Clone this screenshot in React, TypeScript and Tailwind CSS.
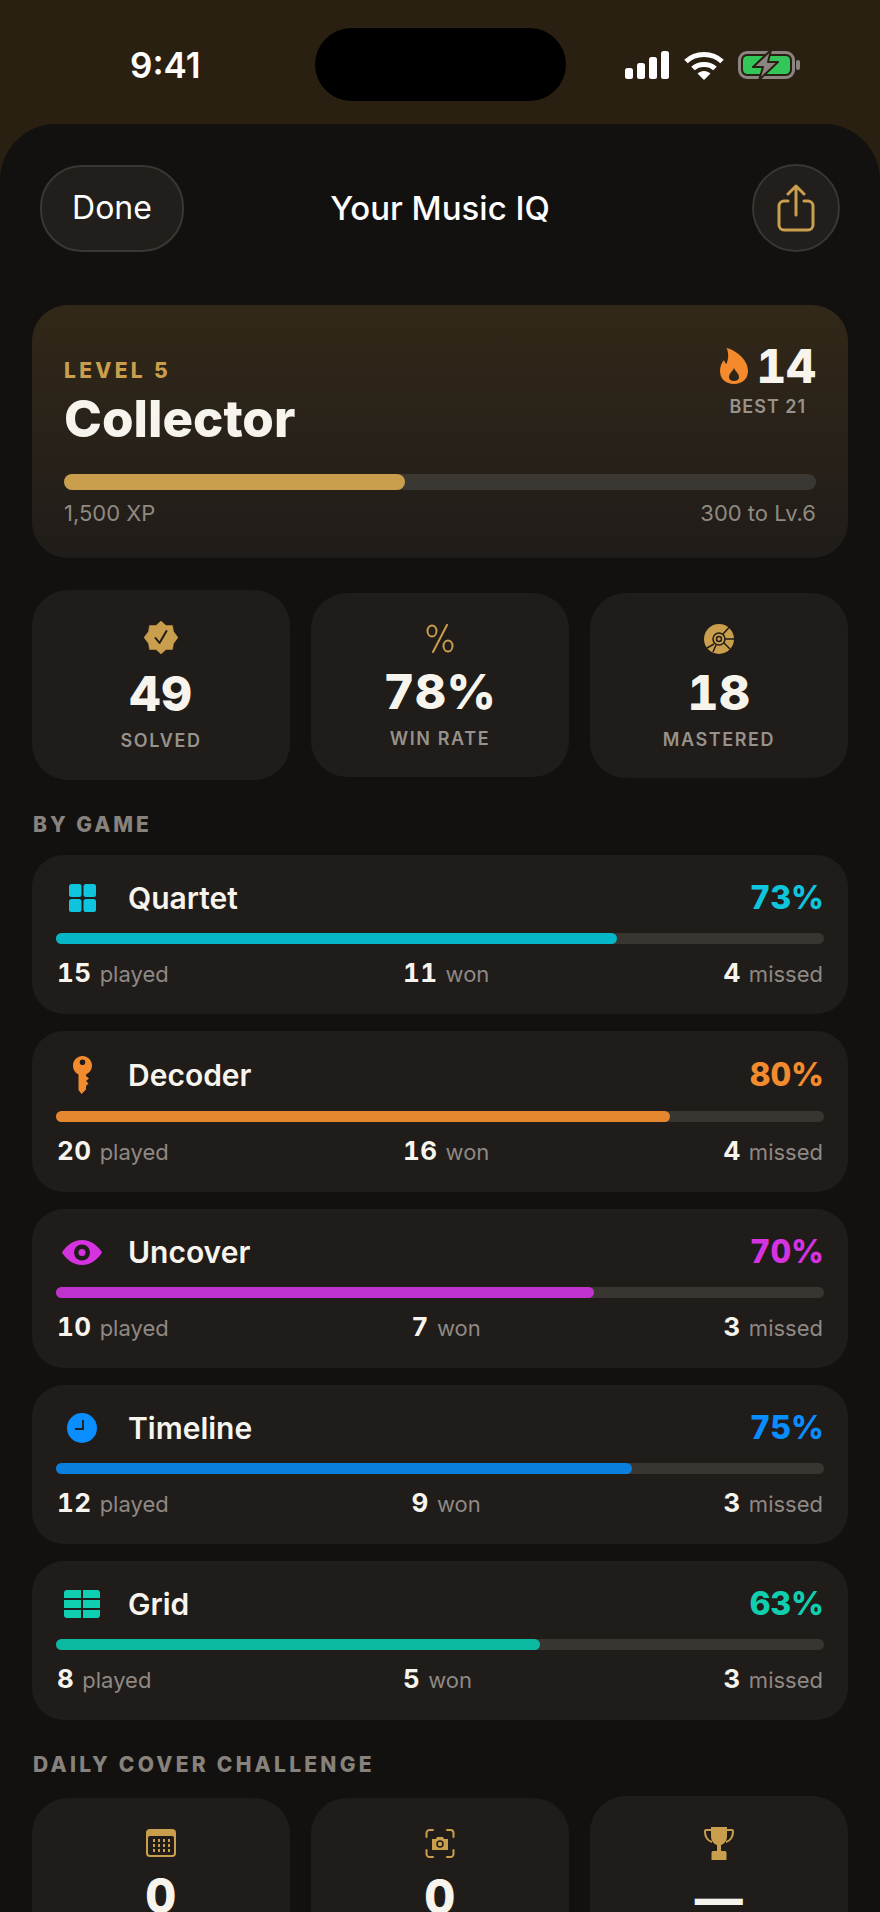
import React from 'react';

const Signal = () => (
  <svg width="45" height="28" viewBox="0 0 45 28" fill="#fff">
    <rect x="0" y="17" width="8" height="11" rx="2.5" />
    <rect x="12" y="12" width="8" height="16" rx="2.5" />
    <rect x="24" y="6" width="8" height="22" rx="2.5" />
    <rect x="36" y="0" width="8" height="28" rx="2.5" />
  </svg>
);
const Wifi = () => (
  <svg width="40" height="29" viewBox="0 0 40 29" fill="none" stroke="#fff" strokeWidth="5">
    <path d="M2 10.5C11.5 1 28.5 1 38 10.5" />
    <path d="M9 17.5C14.5 12 25.5 12 31 17.5" />
    <path d="M13.5 22.5L20 29L26.5 22.5C23 19 17 19 13.5 22.5Z" fill="#fff" stroke="none" />
  </svg>
);
const Battery = () => (
  <svg width="62" height="30" viewBox="0 0 62 30" fill="none">
    <rect x="1.5" y="2.5" width="54" height="25" rx="7.5" stroke="#8a8580" strokeWidth="3" />
    <rect x="5" y="6" width="47" height="18" rx="4.5" fill="#33c75a" />
    <rect x="58" y="10" width="4" height="10" rx="2" fill="#8a8580" />
    <path d="M33 0L15 17H25L21 30L40 12H30Z" fill="#8a8580" stroke="#2a2010" strokeWidth="2" strokeLinejoin="round" />
  </svg>
);
const Share = () => (
  <svg width="38" height="48" viewBox="0 0 38 48" fill="none" stroke="#c99e4c" strokeWidth="3" strokeLinecap="round" strokeLinejoin="round">
    <path d="M11 17H7A5 5 0 0 0 2 22V41A5 5 0 0 0 7 46H31A5 5 0 0 0 36 41V22A5 5 0 0 0 31 17H27" />
    <path d="M19 31V2M11 10L19 2L27 10" />
  </svg>
);
const Flame = () => (
  <svg width="28" height="36" viewBox="0 0 28 36">
    <path
      fillRule="evenodd"
      fill="#f58a2c"
      d="M6.500 0C15 2 28 11 28 23C28 31 22 36 14 36C6 36 0 31 0 23C0 18 2 14.500 4 12C4.500 13.500 5 15 6.500 16C8.500 11 9 5 6.500 0ZM14 20C13 23 9 25.500 9 29C9 31.500 11.200 33 14 33C16.800 33 19 31.500 19 29C19 25.500 15 23 14 20Z"
    />
  </svg>
);
const Badge = () => (
  <svg width="34" height="33" viewBox="0 0 34 33">
    <path fill="#c99e4c" d="M17 0L22 4.500L28.500 4.500L29.500 10.500L34 16.500L29.500 22.500L28.500 28.500L22 28.500L17 33L12 28.500L5.500 28.500L4.500 22.500L0 16.500L4.500 10.500L5.500 4.500L12 4.500Z" stroke="#c99e4c" strokeWidth="0.500" strokeLinejoin="round" />
    <path d="M11.500 17L15.500 22L22.500 10" fill="none" stroke="#201c19" strokeWidth="2" strokeLinecap="round" strokeLinejoin="round" />
  </svg>
);
const Percent = () => (
  <svg width="28" height="29" viewBox="0 0 28 29" fill="none" stroke="#c99e4c" strokeWidth="2">
    <ellipse cx="6" cy="7" rx="4.500" ry="5.500" />
    <ellipse cx="22" cy="22" rx="4.500" ry="5.500" />
    <path d="M21 1L7 28" strokeLinecap="round" />
  </svg>
);
const Disc = () => (
  <svg width="30" height="30" viewBox="0 0 30 30">
    <circle cx="15" cy="15" r="15" fill="#c99e4c" />
    <circle cx="15" cy="15" r="6" fill="none" stroke="#201c19" strokeWidth="1.500" />
    <circle cx="15" cy="15" r="2.500" fill="none" stroke="#201c19" strokeWidth="1.500" />
    <path d="M19 10L25 3.500M21 15H30M20 19L26 25M10 20L3 24M12 21L9 28" stroke="#201c19" strokeWidth="1.500" />
  </svg>
);
const Calendar = () => (
  <svg width="30" height="28" viewBox="0 0 30 28">
    <rect x="0" y="0" width="30" height="28" rx="4" fill="#c99e4c" />
    <rect x="2" y="7" width="26" height="19" rx="2" fill="#201c19" />
    {[10, 15, 20].map((y) =>
      [7, 12, 17, 22].map((x) => <rect key={x + '-' + y} x={x} y={y} width="2" height="3" fill="#c99e4c" />)
    )}
  </svg>
);
const CameraScan = () => (
  <svg width="30" height="29" viewBox="0 0 30 29" fill="none">
    <path d="M1.500 8V4A3 3 0 0 1 4.500 1H8M22 1H25.500A3 3 0 0 1 28.500 4V8M28.500 21V25A3 3 0 0 1 25.500 28H22M8 28H4.500A3 3 0 0 1 1.500 25V21" stroke="#c99e4c" strokeWidth="2" strokeLinecap="round" />
    <path d="M7 10H11L12 8H18L19 10H23V21H7Z" fill="#c99e4c" />
    <circle cx="15" cy="15" r="3" fill="none" stroke="#201c19" strokeWidth="1.500" />
  </svg>
);
const Trophy = () => (
  <svg width="30" height="33" viewBox="0 0 30 33" fill="#c99e4c">
    <path d="M7 0H23V9C23 14 20 17 17 18V24H21C22 24 22.500 25 22.500 26V33H7.500V26C7.500 25 8 24 9 24H13V18C10 17 7 14 7 9Z" />
    <path d="M7 3H2C1 3 1 4 1 5C1 10 4 14 8 15M23 3H28C29 3 29 4 29 5C29 10 26 14 22 15" fill="none" stroke="#c99e4c" strokeWidth="2" />
  </svg>
);
const Quartet = () => (
  <svg width="27" height="28" viewBox="0 0 27 28" fill="#0fc5dd">
    <rect x="0" y="0" width="12.500" height="13" rx="2.500" />
    <rect x="14.500" y="0" width="12.500" height="13" rx="2.500" />
    <rect x="0" y="15" width="12.500" height="13" rx="2.500" />
    <rect x="14.500" y="15" width="12.500" height="13" rx="2.500" />
  </svg>
);
const KeyIcon = () => (
  <svg width="19" height="38" viewBox="0 0 19 38">
    <path
      fillRule="evenodd"
      fill="#f28b2e"
      d="M9.500 0C14.700 0 19 4.300 19 9.500C19 13.500 16.500 17 13 18.400V20L16 22.500L13 25L15.500 27.500L13 30V33.500L8.500 38L5.500 34V18.400C2.200 17 0 13.500 0 9.500C0 4.300 4.300 0 9.500 0ZM9.500 3.500A2.800 2.800 0 1 0 9.500 9.100A2.800 2.800 0 1 0 9.500 3.500Z"
    />
  </svg>
);
const Eye = () => (
  <svg width="40" height="25" viewBox="0 0 40 25">
    <path fill="#d633e0" d="M20 0C29 0 36 6 40 12.500C36 19 29 25 20 25C11 25 4 19 0 12.500C4 6 11 0 20 0Z" />
    <circle cx="20" cy="12.500" r="8" fill="#201c19" />
    <circle cx="20" cy="12.500" r="3.500" fill="#d633e0" />
  </svg>
);
const Clock = () => (
  <svg width="30" height="30" viewBox="0 0 30 30">
    <circle cx="15" cy="15" r="15" fill="#0a8dff" />
    <path d="M16 7V16H8" fill="none" stroke="#201c19" strokeWidth="1.800" />
  </svg>
);
const GridIcon = () => (
  <svg width="36" height="28" viewBox="0 0 36 28" fill="#10cfb0">
    <path d="M3 0H17V8H0V3A3 3 0 0 1 3 0Z" />
    <path d="M19 0H33A3 3 0 0 1 36 3V8H19Z" />
    <rect x="0" y="10" width="17" height="8" />
    <rect x="19" y="10" width="17" height="8" />
    <path d="M0 20H17V28H3A3 3 0 0 1 0 25Z" />
    <path d="M19 20H36V25A3 3 0 0 1 33 28H19Z" />
  </svg>
);

type StatProps = { icon: React.ReactNode; value: string; label?: string; iconBox: string; gapBox: string; pbBox: string };
const Stat = ({ icon, value, label, iconBox, gapBox, pbBox }: StatProps) => (
  <div className={`flex flex-col items-center rounded-[36px] bg-[#201c19] pt-[31px] ${pbBox}`}>
    <div className={`flex items-center justify-center ${iconBox}`}>{icon}</div>
    <div className={`text-[48px] font-extrabold leading-[48px] tabular-nums tracking-[0.5px] text-[#f7f4ee] ${gapBox}`}>{value}</div>
    {label ? <div className="mt-[12px] text-[18px] font-semibold leading-[22px] tracking-[1.6px] text-[#97928b]">{label}</div> : null}
  </div>
);

type Game = {
  name: string;
  pct: string;
  width: string;
  text: string;
  bar: string;
  icon: React.ReactNode;
  head: string;
  played: string;
  won: string;
  missed: string;
};
const games: Game[] = [
  { name: 'Quartet', pct: '73%', width: 'w-[73%]', text: 'text-[#0fc5dd]', bar: 'bg-[#06b6c6]', icon: <Quartet />, head: 'h-[36px]', played: '15', won: '11', missed: '4' },
  { name: 'Decoder', pct: '80%', width: 'w-[80%]', text: 'text-[#f28b2e]', bar: 'bg-[#e5872e]', icon: <KeyIcon />, head: 'h-[38px]', played: '20', won: '16', missed: '4' },
  { name: 'Uncover', pct: '70%', width: 'w-[70%]', text: 'text-[#d633e0]', bar: 'bg-[#bf33cc]', icon: <Eye />, head: 'h-[36px]', played: '10', won: '7', missed: '3' },
  { name: 'Timeline', pct: '75%', width: 'w-[75%]', text: 'text-[#0a8dff]', bar: 'bg-[#0a7fe0]', icon: <Clock />, head: 'h-[36px]', played: '12', won: '9', missed: '3' },
  { name: 'Grid', pct: '63%', width: 'w-[63%]', text: 'text-[#10cfb0]', bar: 'bg-[#0bb8a0]', icon: <GridIcon />, head: 'h-[36px]', played: '8', won: '5', missed: '3' },
];

const Count = ({ n, label }: { n: string; label: string }) => (
  <span className="flex items-baseline gap-[8px]">
    <span className="text-[26px] font-bold leading-[30px] tabular-nums tracking-[0.5px] text-[#f7f4ee]">{n}</span>
    <span className="text-[22px] font-normal leading-[30px] text-[#8e8985]">{label}</span>
  </span>
);

const GameCard = ({ g }: { g: Game }) => (
  <div className="rounded-[32px] bg-[#201c19] px-[24px] pb-[26px] pt-[25px]">
    <div className={`flex items-center ${g.head}`}>
      <div className="flex w-[52px] items-center justify-center">{g.icon}</div>
      <div className="ml-[20px] text-[30px] font-semibold leading-[36px] text-[#f7f4ee]">{g.name}</div>
      <div className={`ml-auto text-[32px] font-extrabold leading-[36px] tabular-nums ${g.text}`}>{g.pct}</div>
    </div>
    <div className="mt-[17px] h-[11px] rounded-full bg-[#393531]">
      <div className={`h-full rounded-full ${g.width} ${g.bar}`} />
    </div>
    <div className="mt-[14px] flex h-[30px] items-center justify-between px-[1px]">
      <Count n={g.played} label="played" />
      <Count n={g.won} label="won" />
      <Count n={g.missed} label="missed" />
    </div>
  </div>
);

export default function App() {
  return (
    <div className="h-[1912px] w-[880px] overflow-hidden bg-[#2a2012] [font-family:Inter,sans-serif]">
      <div className="relative flex h-[124px] items-start justify-between">
        <div className="ml-[130px] mt-[44px] text-[35px] font-semibold leading-[42px] text-white">9:41</div>
        <div className="absolute left-[315px] top-[28px] h-[73px] w-[251px] rounded-full bg-black" />
        <div className="mr-[80px] mt-[50px] flex items-center gap-[14px]">
          <Signal />
          <Wifi />
          <Battery />
        </div>
      </div>
      <div className="h-[1788px] rounded-t-[56px] bg-[#131110] px-8">
        <div className="grid grid-cols-[1fr_auto_1fr] items-center px-2 pt-[40px]">
          <div className="flex h-[87px] w-[144px] items-center justify-center rounded-[42px] border-2 border-[#3a3632] bg-[#211e1b] text-[32px] font-normal text-white">Done</div>
          <div className="text-[33px] font-medium leading-[40px] text-white">Your Music IQ</div>
          <div className="flex h-[88px] w-[88px] items-center justify-center justify-self-end rounded-full border-2 border-[#3a3632] bg-[#211e1b]">
            <Share />
          </div>
        </div>

        <div className="mt-[53px] rounded-[36px] bg-gradient-to-b from-[#322818] to-[#201c19] px-[32px] pb-[32px]">
          <div className="flex justify-between">
            <div className="pt-[54px]">
              <div className="text-[21px] font-extrabold leading-[24px] tracking-[3.3px] text-[#c99e4c]">LEVEL 5</div>
              <div className="mt-[8px] text-[51px] font-extrabold leading-[56px] text-[#f7f4ee]">Collector</div>
            </div>
            <div className="flex flex-col items-center pt-[38px]">
              <div className="flex h-[46px] items-center gap-[9px]">
                <Flame />
                <span className="text-[46px] font-extrabold leading-[46px] tabular-nums text-[#f7f4ee]">14</span>
              </div>
              <div className="mt-[7px] text-[18px] font-semibold leading-[22px] tracking-[1px] text-[#97928b]">BEST 21</div>
            </div>
          </div>
          <div className="mt-[27px] h-[16px] rounded-full bg-[#3b3732]">
            <div className="h-full w-[45.4%] rounded-full bg-[#c99e4c]" />
          </div>
          <div className="mt-[10px] flex justify-between text-[22px] leading-[26px] text-[#8f8a82]">
            <span>1,500 XP</span>
            <span>300 to Lv.6</span>
          </div>
        </div>

        <div className="mt-[32px] grid grid-cols-3 items-center gap-[21px]">
          <Stat icon={<Badge />} value="49" label="SOLVED" iconBox="h-[33px]" gapBox="mt-[16px]" pbBox="pb-[28px]" />
          <Stat icon={<Percent />} value="78%" label="WIN RATE" iconBox="h-[29px]" gapBox="mt-[15px]" pbBox="pb-[27px]" />
          <Stat icon={<Disc />} value="18" label="MASTERED" iconBox="h-[30px]" gapBox="mt-[15px]" pbBox="pb-[27px]" />
        </div>

        <div className="mb-[17px] ml-[1px] mt-[32px] text-[21px] font-extrabold leading-[26px] tracking-[2.95px] text-[#87827c]">BY GAME</div>
        <div className="flex flex-col gap-[17px]">
          {games.map((g) => (
            <GameCard key={g.name} g={g} />
          ))}
        </div>

        <div className="mb-[18px] ml-[1px] mt-[32px] text-[21px] font-extrabold leading-[26px] tracking-[3.25px] text-[#87827c]">DAILY COVER CHALLENGE</div>
        <div className="grid grid-cols-3 items-center gap-[21px]">
          <Stat icon={<Calendar />} value="0" iconBox="h-[28px]" gapBox="mt-[15px]" pbBox="pb-[62px]" />
          <Stat icon={<CameraScan />} value="0" iconBox="h-[29px]" gapBox="mt-[15px]" pbBox="pb-[61px]" />
          <Stat icon={<Trophy />} value="—" iconBox="h-[33px]" gapBox="mt-[15px]" pbBox="pb-[61px]" />
        </div>
      </div>
    </div>
  );
}
